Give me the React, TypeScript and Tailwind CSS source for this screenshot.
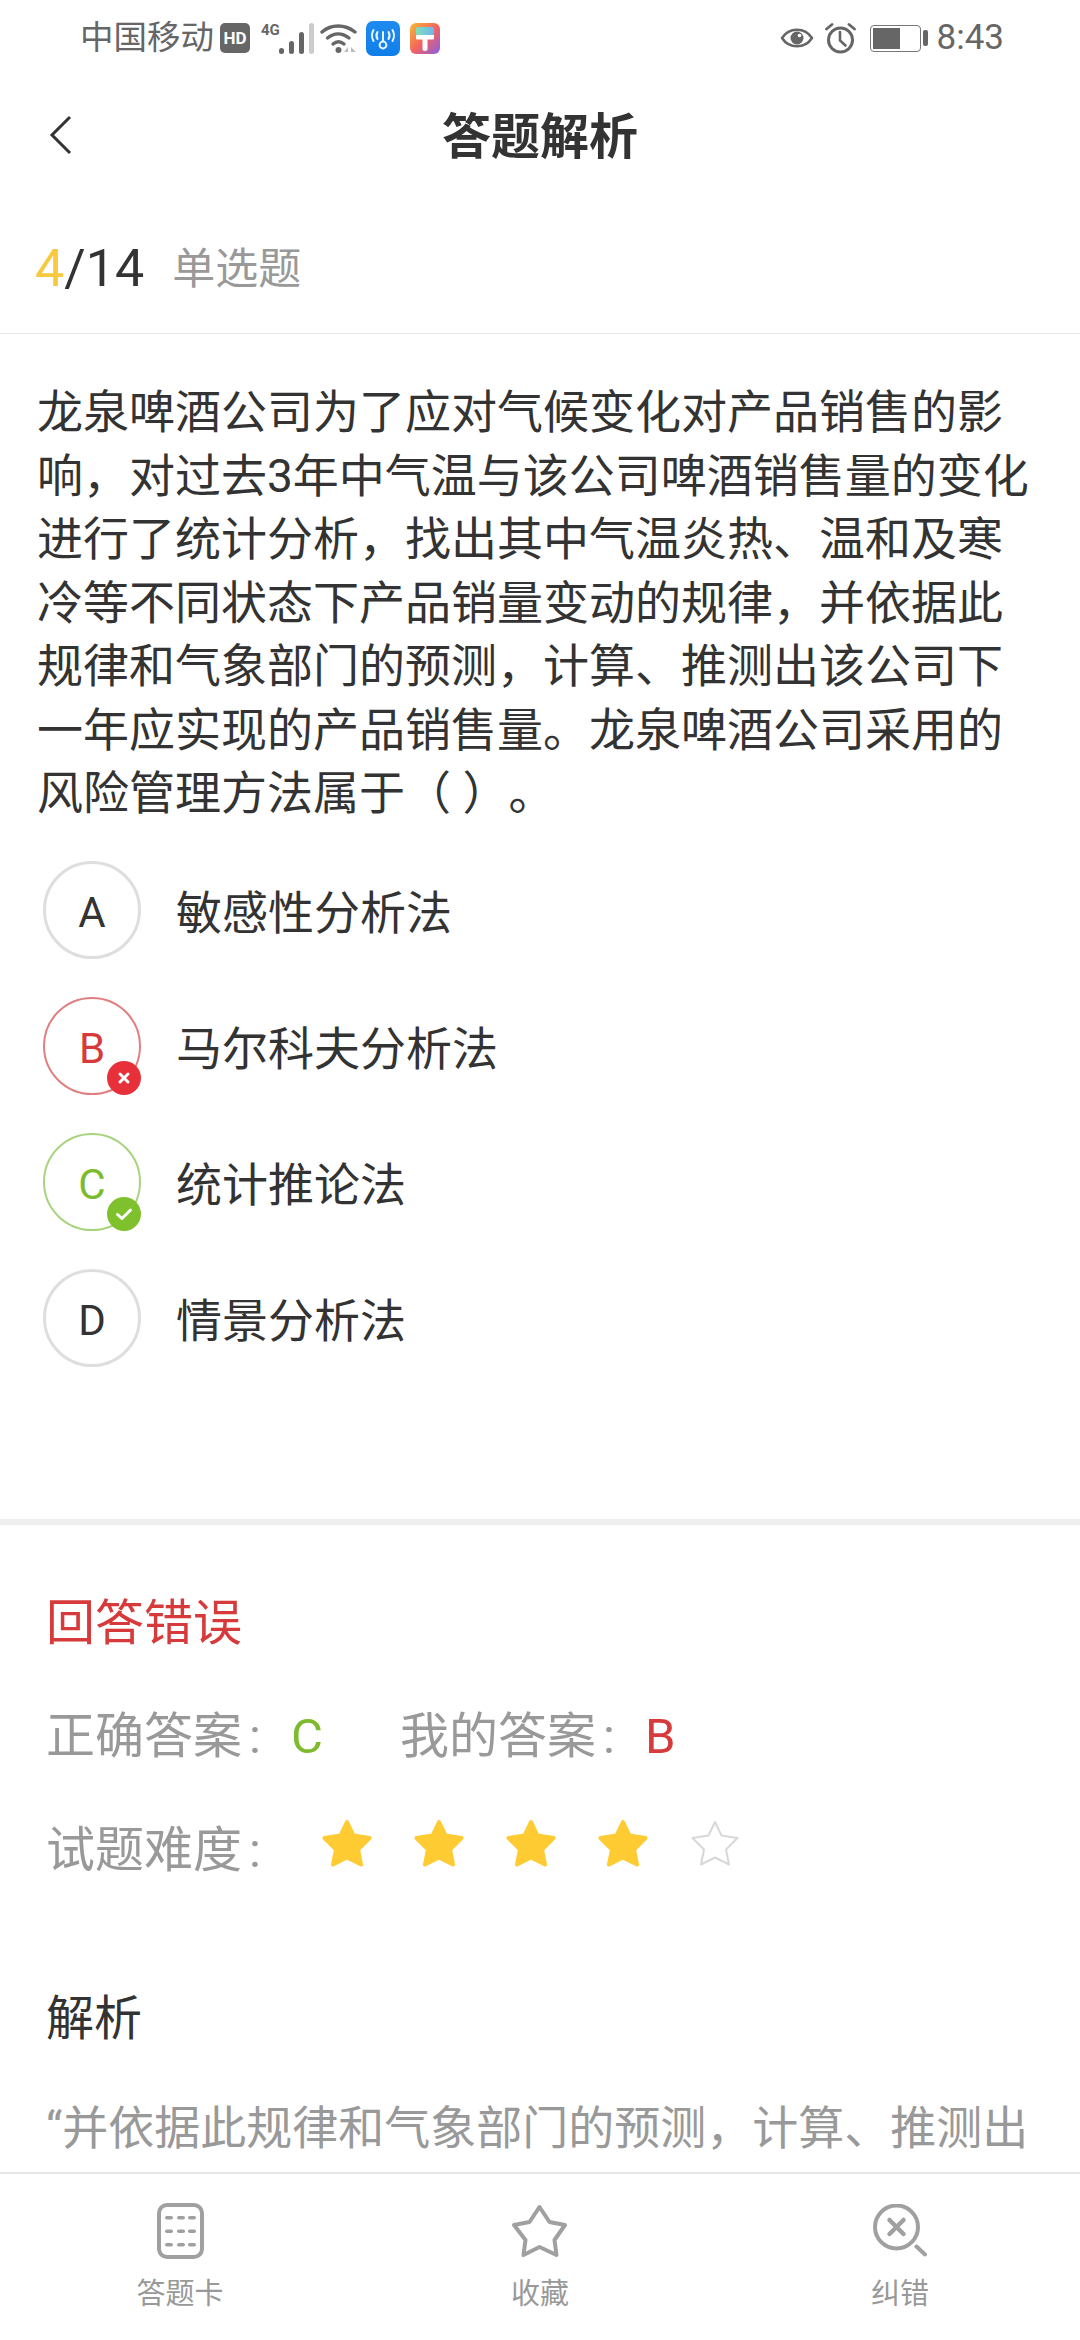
const FONT = 'font-["Roboto","Noto_Sans_CJK_SC",sans-serif]';

function Wifi() {
  return (
    <svg width="38" height="31" viewBox="0 0 38 31" fill="none" className="ml-[6px]">
      <path d="M2 9C11 1 25 1 35 9" stroke="#666" strokeWidth="3.4" strokeLinecap="round" />
      <path d="M7.5 15C14 9.5 22 9.5 29 15" stroke="#666" strokeWidth="3.4" strokeLinecap="round" />
      <path d="M13 21C16.5 18 20.5 18 24 21" stroke="#666" strokeWidth="3.4" strokeLinecap="round" />
      <circle cx="18.5" cy="27" r="3" fill="#666" />
      <path d="M24 29L28 24V29ZM31 24L36 29H31Z" fill="#bbb" />
    </svg>
  );
}

function Signal() {
  return (
    <div className="relative ml-[11px] h-[31px] w-[53px]">
      <span className="absolute left-0 top-0 text-[15px] leading-[15px] font-bold text-[#666]">4G</span>
      <svg width="35" height="31" viewBox="0 0 35 31" className="absolute left-[18px] top-0">
        <rect x="0" y="25" width="5" height="6" rx="2.5" fill="#666" />
        <rect x="10" y="18" width="5" height="13" rx="2.5" fill="#666" />
        <rect x="20" y="9" width="5" height="22" rx="2.5" fill="#666" />
        <rect x="30" y="0" width="5" height="31" rx="2.5" fill="#ccc" />
      </svg>
    </div>
  );
}

function BlueApp() {
  return (
    <svg width="34" height="35" viewBox="0 0 34 35" fill="none" className="ml-[8px]">
      <defs>
        <linearGradient id="blueApp" x1="0" y1="0" x2="0" y2="1">
          <stop offset="0" stopColor="#1f8bf0" />
          <stop offset="1" stopColor="#0f7fe8" />
        </linearGradient>
      </defs>
      <rect width="34" height="35" rx="7" fill="url(#blueApp)" />
      <circle cx="17" cy="24" r="3.4" stroke="#e8f4ff" strokeWidth="2" />
      <path d="M17 20V11" stroke="#e8f4ff" strokeWidth="2" strokeLinecap="round" />
      <path d="M11.5 11C10.3 13 10.3 16 11.5 18M22.5 11C23.7 13 23.7 16 22.5 18M7.5 9C5.5 12.5 5.5 16.5 7.5 20M26.5 9C28.5 12.5 28.5 16.5 26.5 20" stroke="#e8f4ff" strokeWidth="2" strokeLinecap="round" />
    </svg>
  );
}

function PaintApp() {
  return (
    <svg width="30" height="31" viewBox="0 0 30 31" className="ml-[10px]">
      <defs>
        <linearGradient id="paintApp" x1="0" y1="0" x2="1" y2="1">
          <stop offset="0" stopColor="#f9b934" />
          <stop offset="0.5" stopColor="#f4655c" />
          <stop offset="1" stopColor="#8a5ce8" />
        </linearGradient>
        <linearGradient id="paintTop" x1="0" y1="0" x2="1" y2="0">
          <stop offset="0" stopColor="#7fe0b8" />
          <stop offset="1" stopColor="#6fb4f0" />
        </linearGradient>
      </defs>
      <rect width="30" height="31" rx="6" fill="url(#paintApp)" />
      <rect x="6" y="4" width="18" height="8" rx="1.5" fill="url(#paintTop)" />
      <path d="M6 12H24V15C24 16 23.5 16.5 22.5 16.5H17.5V26C17.5 28.5 12.5 28.5 12.5 26V16.5H7.5C6.5 16.5 6 16 6 15Z" fill="#fff" />
    </svg>
  );
}

function Eye() {
  return (
    <svg width="34" height="26" viewBox="0 0 34 26" fill="none">
      <path d="M2 13C9 2 25 2 32 13C25 24 9 24 2 13Z" stroke="#666" strokeWidth="2.6" strokeLinejoin="round" />
      <circle cx="17" cy="13" r="6.5" fill="#666" />
      <circle cx="19.5" cy="10.5" r="1.8" fill="#fff" />
    </svg>
  );
}

function Alarm() {
  return (
    <svg width="31" height="32" viewBox="0 0 31 32" fill="none" className="ml-[11px]">
      <circle cx="15.5" cy="18" r="12" stroke="#666" strokeWidth="3" />
      <path d="M15 10V18.5L20.5 23.5" stroke="#666" strokeWidth="2.6" strokeLinecap="round" />
      <path d="M1.5 7L7 2.5M24 2.5L29.5 7" stroke="#666" strokeWidth="2.8" strokeLinecap="round" />
    </svg>
  );
}

function Battery() {
  return (
    <div className="ml-[14px] flex items-center">
      <div className="flex h-[27px] w-[51px] items-stretch rounded-[4px] border-[1.5px] border-[#777] p-[2px]">
        <div className="w-[27px] bg-[#666]" />
      </div>
      <div className="ml-[2px] h-[16px] w-[5px] rounded-[2px] bg-[#666]" />
    </div>
  );
}

function StatusBar() {
  return (
    <div className="flex h-[76px] items-center justify-between pl-[80px] pr-[76px] text-[#666]">
      <div className="flex items-center">
        <span className="text-[33.5px] leading-[40px]">中国移动</span>
        <span className="ml-[6px] flex h-[30px] w-[30px] items-center justify-center rounded-[5px] bg-[#666] text-[17px] font-bold leading-none text-white">HD</span>
        <Signal />
        <Wifi />
        <BlueApp />
        <PaintApp />
      </div>
      <div className="flex items-center">
        <Eye />
        <Alarm />
        <Battery />
        <span className="ml-[9px] text-[35px] leading-[40px]">8:43</span>
      </div>
    </div>
  );
}

function Header() {
  return (
    <div className="relative flex h-[124px] items-center justify-center">
      <svg width="24" height="40" viewBox="0 0 24 40" fill="none" className="absolute left-[49px] top-[39px]">
        <path d="M21 2L3 20L21 38" stroke="#333" strokeWidth="3" />
      </svg>
      <h1 className="text-[49px] font-bold leading-[60px] text-[#333]">答题解析</h1>
    </div>
  );
}

function Option({ letter, text, state }: { letter: string; text: string; state?: "wrong" | "right" }) {
  const ring =
    state === "wrong"
      ? "border-2 border-[#df7f7f] text-[#d63a3a]"
      : state === "right"
        ? "border-2 border-[#a9d47f] text-[#7dbb2d]"
        : "border-[3px] border-[#dedede] text-[#333]";
  return (
    <div className="flex h-[98px] items-center">
      <div className={`relative flex h-[98px] w-[98px] items-center justify-center rounded-full pt-[5px] ${ring}`}>
        <span className="text-[42px] leading-none">{letter}</span>
        {state === "wrong" && (
          <span className="absolute bottom-[-2px] right-[-2px] flex h-[34px] w-[34px] items-center justify-center rounded-full bg-[#e7303a]">
            <svg width="14" height="14" viewBox="0 0 14 14" fill="none">
              <path d="M3 3L11 11M11 3L3 11" stroke="#fff" strokeWidth="3" strokeLinecap="round" />
            </svg>
          </span>
        )}
        {state === "right" && (
          <span className="absolute bottom-[-2px] right-[-2px] flex h-[34px] w-[34px] items-center justify-center rounded-full bg-[#7fc02d]">
            <svg width="18" height="14" viewBox="0 0 18 14" fill="none">
              <path d="M2.5 7.5L7 11.5L15.5 3" stroke="#fff" strokeWidth="3" strokeLinecap="round" strokeLinejoin="round" />
            </svg>
          </span>
        )}
      </div>
      <span className="ml-[35px] pt-[6px] text-[46px] leading-[60px] text-[#333]">{text}</span>
    </div>
  );
}

function RateStar({ filled }: { filled: boolean }) {
  return (
    <svg width="52" height="48" viewBox="0 0 52 48">
      <path
        d="M26 3L32.5 16.5L48.5 19L37 30.5L40 45.5L26 38.5L12 45.5L15 30.5L3.5 19L19.5 16.5Z"
        fill={filled ? "#ffcb33" : "#fff"}
        stroke={filled ? "#ffcb33" : "#d8d8d8"}
        strokeWidth={filled ? 4 : 2}
        strokeLinejoin="round"
      />
    </svg>
  );
}

function CardIcon() {
  const rows = [13, 26.5, 40];
  const cols = [8, 20, 31];
  return (
    <svg width="47" height="56" viewBox="0 0 47 56" fill="none">
      <rect x="2" y="2" width="43" height="52" rx="8" stroke="#a0a0a0" strokeWidth="4" />
      {rows.map((y) =>
        cols.map((x) => (
          <rect key={`${x}-${y}`} x={x} y={y} width="8" height="3.5" rx="1.75" fill="#a0a0a0" />
        )),
      )}
    </svg>
  );
}

function StarIcon() {
  return (
    <svg width="58" height="55" viewBox="0 0 58 55" fill="none">
      <path d="M28.5 3L38.5 18L54 21L43.5 36L45.5 51L28.5 43L12.5 51L14.5 36L3 21L18.5 18Z" stroke="#a0a0a0" strokeWidth="4" strokeLinejoin="round" />
    </svg>
  );
}

function CorrectIcon() {
  return (
    <svg width="54" height="54" viewBox="0 0 54 54" fill="none">
      <circle cx="23.5" cy="23" r="21.5" stroke="#a0a0a0" strokeWidth="4" />
      <path d="M16.5 16L30.5 30M30.5 16L16.5 30" stroke="#a0a0a0" strokeWidth="4.5" strokeLinecap="round" />
      <path d="M43.5 42.5L52 50.5" stroke="#a0a0a0" strokeWidth="4" strokeLinecap="round" />
    </svg>
  );
}

function Tab({ icon, label }: { icon: React.ReactNode; label: string }) {
  return (
    <div className="flex flex-1 flex-col items-center">
      <div className="flex h-[56px] items-center">{icon}</div>
      <span className="mt-[17px] text-[29px] leading-[36px] text-[#999]">{label}</span>
    </div>
  );
}

export default function App() {
  return (
    <div className={`flex h-[2340px] w-[1080px] flex-col overflow-hidden bg-white ${FONT}`}>
      <StatusBar />
      <Header />
      <div className="flex h-[134px] items-center border-b border-[#e6e6e6] pl-[35px] pt-[4px]">
        <span className="text-[52px] leading-[60px] text-[#333]">
          <span className="text-[#f8c93e]">4</span>/14
        </span>
        <span className="ml-[28px] text-[43px] leading-[60px] text-[#999]">单选题</span>
      </div>
      <div className="min-h-0 flex-1 overflow-hidden">
        <p className="px-[37px] pt-[47px] text-[46px] leading-[63.5px] text-[#333] [text-spacing-trim:space-all]">
          龙泉啤酒公司为了应对气候变化对产品销售的影响，对过去3年中气温与该公司啤酒销售量的变化进行了统计分析，找出其中气温炎热、温和及寒冷等不同状态下产品销量变动的规律，并依据此规律和气象部门的预测，计算、推测出该公司下一年应实现的产品销售量。龙泉啤酒公司采用的风险管理方法属于（ ）。
        </p>
        <div className="mt-[35.5px] flex flex-col gap-[38px] pl-[43px]">
          <Option letter="A" text="敏感性分析法" />
          <Option letter="B" text="马尔科夫分析法" state="wrong" />
          <Option letter="C" text="统计推论法" state="right" />
          <Option letter="D" text="情景分析法" />
        </div>
        <div className="mt-[152px] h-[6px] bg-[#eeeeee]" />
        <div className="px-[46px]">
          <div className="mt-[69px] text-[49px] leading-[60px] text-[#d63a3a]">回答错误</div>
          <div className="mt-[53px] flex text-[49px] leading-[60px] text-[#999]">
            <span className="w-[245px]">正确答案<span className="ml-[7px]">:</span></span>
            <span className="w-[109px] text-[#7dbb2d]">C</span>
            <span className="w-[245px]">我的答案<span className="ml-[7px]">:</span></span>
            <span className="text-[#d63a3a]">B</span>
          </div>
          <div className="mt-[52px] flex items-center text-[49px] leading-[60px] text-[#999]">
            <span className="w-[275px] pt-[2px]">试题难度<span className="ml-[7px]">:</span></span>
            <div className="flex gap-[40px] pb-[14px]">
              <RateStar filled />
              <RateStar filled />
              <RateStar filled />
              <RateStar filled />
              <RateStar filled={false} />
            </div>
          </div>
          <div className="mt-[108px] text-[48px] leading-[60px] text-[#333]">解析</div>
          <p className="mt-[43px] text-[46px] leading-[72px] text-[#999] [text-spacing-trim:space-all]">“并依据此规律和气象部门的预测，计算、推测出该公司下一年应实现的产品销售量。</p>
        </div>
      </div>
      <div className="flex h-[168px] shrink-0 border-t-2 border-[#e6e6e6] bg-white pt-[29px]">
        <Tab icon={<CardIcon />} label="答题卡" />
        <Tab icon={<StarIcon />} label="收藏" />
        <Tab icon={<CorrectIcon />} label="纠错" />
      </div>
    </div>
  );
}
